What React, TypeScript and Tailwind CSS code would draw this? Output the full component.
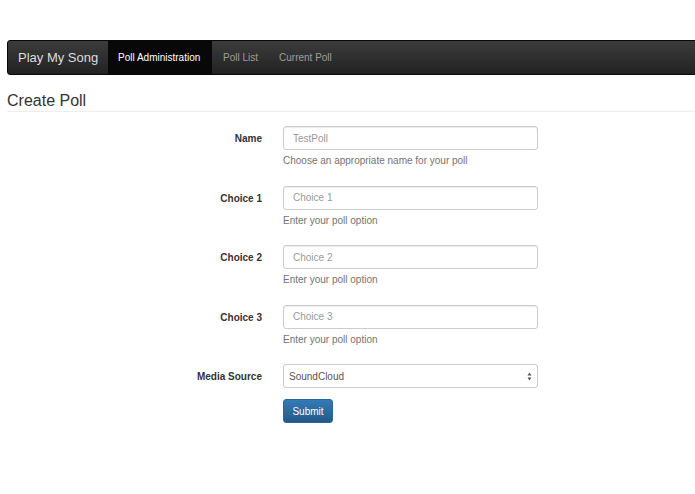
import React from 'react';

const font = { fontFamily: '"Liberation Sans", Arial, sans-serif' };

const Field: React.FC<{ label: string; placeholder: string; help: string }> = ({ label, placeholder, help }) => (
  <div className="flex mb-[17.5px]">
    <label className="w-[262px] pt-[1px] text-right text-[10px] font-bold text-[#333] leading-[24px] h-[24px]">
      {label}
    </label>
    <div className="ml-[21px] w-[255px]">
      <input
        className="block w-full h-[24px] px-[9px] text-[10px] text-[#555] placeholder:text-[#999] border border-[#ccc] rounded-[3px] outline-none shadow-[inset_0_1px_1px_rgba(0,0,0,0.075)]"
        placeholder={placeholder}
        style={font}
      />
      <p className="mt-[4px] text-[10px] leading-[14px] text-[#737373]">{help}</p>
    </div>
  </div>
);

export default function App() {
  return (
    <div className="min-h-[494px] w-[695px] overflow-hidden bg-white pt-[40px] pl-[7px]" style={font}>
      {/* Navbar */}
      <div className="flex items-stretch h-[35px] w-[720px] rounded-l-[3px] bg-gradient-to-b from-[#3c3c3c] to-[#222] border border-[#080808] whitespace-nowrap">
        <div className="flex items-center px-[10px] text-[13px] text-[#ddd] w-[100px]">Play My Song</div>
        <div className="flex items-center px-[10px] text-[10px] text-white bg-[#080808] w-[104px]">Poll Administration</div>
        <div className="flex items-center pl-[11px] text-[10px] text-[#9d9d9d]">Poll List</div>
        <div className="flex items-center pl-[21px] text-[10px] text-[#9d9d9d]">Current Poll</div>
      </div>

      {/* Heading */}
      <h3 className="mt-[16px] text-[16px] leading-[20px] text-[#333] border-b border-[#eee]">Create Poll</h3>

      {/* Form */}
      <div className="mt-[14px] -ml-[7px]">
        <Field label="Name" placeholder="TestPoll" help="Choose an appropriate name for your poll" />
        <Field label="Choice 1" placeholder="Choice 1" help="Enter your poll option" />
        <Field label="Choice 2" placeholder="Choice 2" help="Enter your poll option" />
        <Field label="Choice 3" placeholder="Choice 3" help="Enter your poll option" />

        <div className="flex">
          <label className="w-[262px] pt-[1px] text-right text-[10px] font-bold text-[#333] leading-[24px]">Media Source</label>
          <div className="ml-[21px] w-[255px]">
            <div className="relative h-[24px] w-full border border-[#ccc] rounded-[3px] bg-white flex items-center px-[5px] text-[10px] text-[#555]">
              SoundCloud
              <svg className="absolute right-[5px] top-[7px]" width="5" height="9" viewBox="0 0 5 9">
                <path d="M0.5 3.5 L2.5 0.5 L4.5 3.5 Z" fill="#555" />
                <path d="M0.5 5.5 L2.5 8.5 L4.5 5.5 Z" fill="#555" />
              </svg>
            </div>
            <button
              className="mt-[11px] h-[24px] w-[50px] rounded-[3px] border border-[#2b669a] bg-gradient-to-b from-[#337ab7] to-[#265a88] text-[10px] text-white"
              style={font}
            >
              Submit
            </button>
          </div>
        </div>
      </div>
    </div>
  );
}
